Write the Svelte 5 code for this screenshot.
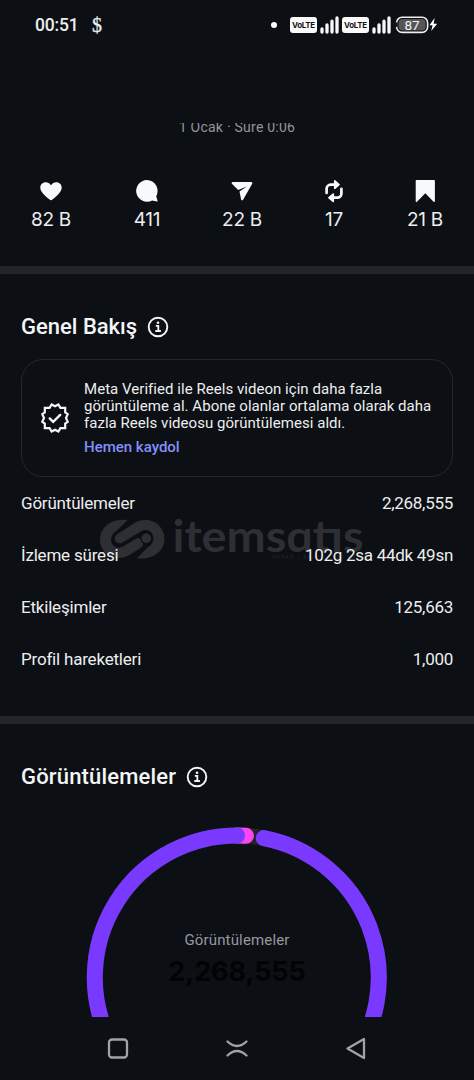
<script>
  const stats = [
    { icon: 'heart', value: '82 B' },
    { icon: 'comment', value: '411' },
    { icon: 'send', value: '22 B' },
    { icon: 'repost', value: '17' },
    { icon: 'save', value: '21 B' }
  ];
  const rows = [
    ['Görüntülemeler', '2,268,555'],
    ['İzleme süresi', '102g 2sa 44dk 49sn'],
    ['Etkileşimler', '125,663'],
    ['Profil hareketleri', '1,000']
  ];
</script>

{#snippet info()}
  <svg class="info" width="22" height="22" viewBox="0 0 22 22" fill="none" stroke="#f4f5f6">
    <circle cx="11" cy="11" r="9.3" stroke-width="1.9" />
    <path d="M8.800 9.900h2.500v4.800M8.300 15h5.600" stroke-width="1.8" />
    <circle cx="11" cy="6.800" r="1.300" fill="#f4f5f6" stroke="none" />
  </svg>
{/snippet}

{#snippet signal()}
  <svg width="19" height="20" viewBox="0 0 19 20" stroke="#f8f8f8" stroke-width="3.300" stroke-linecap="round">
    <path d="M2 14v3M7 10v7M12 6.200V17M17 3v14" />
  </svg>
{/snippet}

<div class="screen">
  <header class="status">
    <span class="clock">00:51</span>
    <span class="dollar">$</span>
    <span class="dot"></span>
    <span class="volte">VoLTE</span>
    {@render signal()}
    <span class="volte second">VoLTE</span>
    {@render signal()}
    <svg class="battery" width="42" height="18" viewBox="0 0 42 18">
      <rect x="1.600" y="1.200" width="31" height="15.200" rx="5.500" fill="#0c0f14" stroke="#eee" stroke-width="1.600" />
      <rect x="3.600" y="3.100" width="27" height="11.400" rx="3.800" fill="#55565a" />
      <path d="M1.400 6.400v4.500" stroke="#0c0f14" stroke-width="2.400" />
      <text x="17" y="13.500" text-anchor="middle" fill="#f5f5f5" font-family="Roboto, sans-serif" font-size="13.500">87</text>
      <path d="M39.600 2 34.400 9.300h3.200L36.200 15l6-7.300h-3.500z" fill="#fff" />
    </svg>
  </header>

  <div class="meta"><span>1 Ocak · Süre 0:06</span></div>

  <section class="stats">
    {#each stats as s}
      <div class="stat">
        <svg width="24" height="24" viewBox="0 0 24 24" fill="#f8f9fa">
          {#if s.icon === 'heart'}
            <path d="M12 21.200c-.5 0-1-.3-1.400-.6C6 16.600 1.300 12.700 1.300 8.700 1.300 5.600 3.700 3.300 6.700 3.300c2.200 0 4 1 5.300 2.900 1.300-1.900 3.100-2.900 5.300-2.900 3 0 5.400 2.300 5.400 5.400 0 4-4.700 7.900-9.300 11.900-.4.300-.9.600-1.400.6z" />
          {:else if s.icon === 'comment'}
            <path d="M12 1.100a10.800 10.800 0 1 0 5.100 20.300l4.900 1.200c.4.100.7-.3.600-.7l-1.400-4.700A10.800 10.800 0 0 0 12 1.100z" />
          {:else if s.icon === 'send'}
            <path d="M2.800 3h18.300c1 0 1.600 1 1.100 1.800L13.100 20.700c-.5.900-1.800.7-2-.3L9.500 12.600l7.200-5-8.500 3.300L2.100 5.100C1.200 4.300 1.700 3 2.800 3z" />
          {:else if s.icon === 'repost'}
            <path d="M4.600 14V9.700a4 4 0 0 1 4-4h5.500M19.400 9.800v4.800a4 4 0 0 1-4 4h-5.500" fill="none" stroke="#f8f9fa" stroke-width="2.700" stroke-linecap="round" />
            <path d="M11.900 2c0-.8.800-1.200 1.400-.7l4.200 3.600c.5.400.5 1 0 1.400l-4.200 3.600c-.6.500-1.400.1-1.400-.7zM12.100 15.100c0-.8-.8-1.200-1.400-.7L6.500 18c-.5.400-.5 1 0 1.400l4.200 3.600c.6.500 1.400.1 1.400-.7z" />
          {:else}
            <path d="M2.700 1.700q0-.7.700-.7h17.800q.7 0 .7.700v20.600c0 .7-.8 1-1.300.5L12.300 14.200 4 22.800c-.5.500-1.300.2-1.300-.5z" />
          {/if}
        </svg>
        <span>{s.value}</span>
      </div>
    {/each}
  </section>

  <div class="divider"></div>

  <section class="overview">
    <h2><span>Genel Bakış</span>{@render info()}</h2>
    <div class="card">
      <svg class="seal" width="32" height="32" viewBox="0 0 32 32" fill="none" stroke="#f5f6f7" stroke-width="2.200" stroke-linejoin="miter">
        <path d="m16 4.300 3.400-1.800 2 3.300h4.800v4.600l2.500 1.800L27 16l1.700 3.800-2.500 1.800v4.600h-4.800l-2 3.300-3.400-1.800-3.400 1.800-2-3.300H5.800v-4.600l-2.500-1.800L5 16l-1.700-3.800 2.500-1.800V5.800h4.800l2-3.300z" />
        <path d="m10.700 16.400 3.500 3.500 7-7" stroke-width="2.400" stroke-linecap="round" />
      </svg>
      <div class="copy">
        <p>Meta Verified ile Reels videon için daha fazla<br />görüntüleme al. Abone olanlar ortalama olarak daha<br />fazla Reels videosu görüntülemesi aldı.</p>
        <span class="link">Hemen kaydol</span>
      </div>
    </div>
    <div class="rows">
      {#each rows as [label, value]}
        <div class="row"><span>{label}</span><span>{value}</span></div>
      {/each}
      <svg class="watermark" width="280" height="46" viewBox="0 0 280 46">
        <g fill="#2d2f33">
          <path d="M27.500 0C24 -.5 20 -.3 17 .3 7 2 0 10 0 19.500 0 30 8 38 19 38c4 0 7-.8 10-2.700l11.500-7.300c6-4 1-12.500-5-9L23.500 26.300C17 30 11 26 11 19.500c0-3.500 2-6 5-8z" />
          <path d="M37 38.200C40 38.800 44 38.700 47 38 57.500 36 64.500 28.500 64.500 19 64.500 8 56 0 45.500 0c-4 0-7.500 1-10.500 2.800L17.500 14c-6 4-1 12 5 8.500L41 11.300C47 8 53.500 12 53.500 18.500c0 3.500-1.700 6-5 8z" />
        </g>
        <circle cx="46.300" cy="18.300" r="6" fill="#0c0f14" />
        <circle cx="46.300" cy="18.300" r="4.700" fill="#2d2f33" />
        <path d="M14.500 13.500 33 1.500" stroke="#0c0f14" stroke-width="1.800" />
        <path d="M31.500 36.500 50 24.500" stroke="#0c0f14" stroke-width="1.800" />
        <text x="72.500" y="31.500" font-family="Lato, sans-serif" font-weight="700" font-size="43" textLength="191" lengthAdjust="spacingAndGlyphs" fill="#2d2f33">itemsɑtıs</text>
        <text x="172" y="38.500" font-family="Inter, sans-serif" font-size="4.500" textLength="102" fill="#292b2f">HESAP / SKIN / EPIN MARKET</text>
      </svg>
    </div>
  </section>

  <div class="divider"></div>

  <section class="views">
    <h2 class="wide"><span>Görüntülemeler</span>{@render info()}</h2>
    <div class="chart">
      <svg width="304" height="192" viewBox="85 825 304 192" fill="none" stroke-width="16" stroke-linecap="round">
        <circle cx="237" cy="977.500" r="142" stroke="#222429" />
        <path d="M237 835.500A142 142 0 0 1 246 835.800" stroke="#fb45f1" />
        <path d="M263.800 838.100A142 142 0 1 1 237 835.500" stroke="#7939ff" />
      </svg>
      <div class="total"><span>Görüntülemeler</span><strong>2,268,555</strong></div>
    </div>
  </section>

  <nav>
    <svg width="22" height="22" viewBox="0 0 22 22"><rect x="2" y="1.500" width="18" height="18" rx="3" /></svg>
    <svg width="24" height="20" viewBox="0 0 24 20"><path d="M2.500 2.500q9.500 9 19 0M2.500 16.500q9.500-9 19 0" /></svg>
    <svg width="22" height="24" viewBox="0 0 22 24"><path d="M20 2v19L3.500 11.500z" /></svg>
  </nav>
</div>

<style>
  :global(body) { margin: 0; background: #0c0f14; }
  .screen {
    width: 474px; height: 1080px; overflow: hidden; background: #0c0f14; color: #eceeef;
    font-family: Roboto, sans-serif; display: flex; flex-direction: column;
  }
  svg { display: block; flex: none; }
  .status { height: 50px; box-sizing: border-box; padding-left: 35px; display: flex; align-items: center; flex: none; }
  .clock { width: 57px; font-size: 17.5px; font-weight: 500; letter-spacing: -.2px; }
  .dollar { width: 179px; font: 20px/24px "Liberation Serif", serif; -webkit-text-stroke: .3px #eceeef; }
  .dot { width: 6px; height: 6px; border-radius: 50%; background: #fff; margin-right: 13px; }
  .volte {
    width: 27px; height: 16px; border-radius: 3px; background: #fafafa; color: #111; margin-right: 3px;
    font: 700 8px/16px Inter, sans-serif; text-align: center; letter-spacing: -.3px;
  }
  .second { margin-left: 3px; }
  .battery { margin-left: 4px; }
  .meta { height: 13px; margin: 73px 0 0; overflow: hidden; display: flex; justify-content: center; align-items: flex-end; color: #92969e; font-size: 14px; letter-spacing: .24px; flex: none; }
  .meta span { line-height: 18px; }
  .stats { display: grid; grid-template-columns: 102px 90px 100px 84px 98px; height: 86px; padding-top: 43px; flex: none; }
  .stat { display: flex; flex-direction: column; align-items: center; font: 19px/24px Inter, sans-serif; letter-spacing: -.3px; gap: 5px; }
  .divider { height: 8px; background: #232429; flex: none; margin-top: .5px; }
  h2 { margin: 0; display: flex; align-items: center; gap: 10px; font-size: 22px; line-height: 30px; font-weight: 500; color: #f4f5f6; }
  .wide { letter-spacing: .17px; }
  .overview { height: 442px; box-sizing: border-box; padding: 38px 21px 0; flex: none; }
  .card { box-sizing: border-box; height: 118px; margin-top: 17px; border: 1px solid #25272c; border-radius: 22px; display: flex; align-items: center; padding-left: 17px; gap: 13px; }
  .copy { font-size: 15px; line-height: 17px; white-space: nowrap; letter-spacing: .04px; padding-top: 2px; }
  p { margin: 0 0 7px; }
  .link { display: block; color: #8490fa; font-weight: 500; letter-spacing: 0; }
  .rows { position: relative; padding-top: .6px; }
  .row { position: relative; z-index: 1; height: 52px; display: flex; justify-content: space-between; align-items: center; font-size: 17px; letter-spacing: -.2px; }
  .row span:last-child { letter-spacing: -.28px; }
  .watermark { position: absolute; left: 79px; top: 43px; overflow: visible; }
  .views { flex: none; height: 293px; box-sizing: border-box; padding: 38px 21px 0; }
  .chart { display: grid; justify-content: center; margin-top: 33px; }
  .chart > * { grid-area: 1 / 1; }
  .total { display: flex; flex-direction: column; align-items: center; padding-top: 105px; }
  .total span { color: #9599a1; font-size: 15px; line-height: 20px; letter-spacing: .15px; }
  .total strong { color: #020305; font: 700 27px/36px Inter, sans-serif; margin-top: 4px; letter-spacing: -.1px; }
  nav { flex: none; height: 63px; display: flex; justify-content: space-between; align-items: center; padding: 0 108px 0 107px; }
  nav svg { fill: none; stroke: #a2a3a6; stroke-width: 2.3; stroke-linecap: round; stroke-linejoin: round; }
</style>
